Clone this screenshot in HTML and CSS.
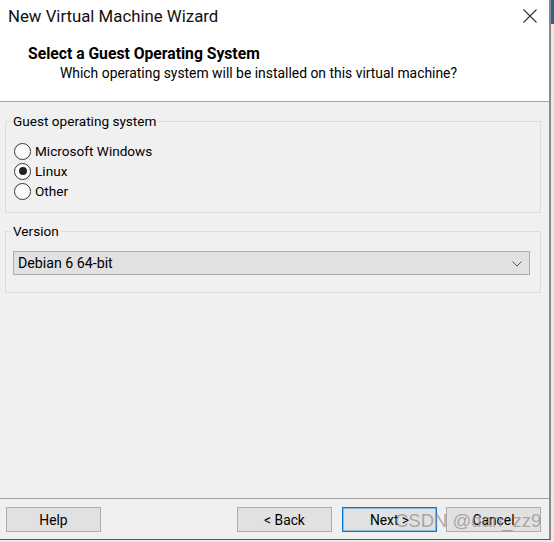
FILE: index.html
```html
<!DOCTYPE html>
<html>
<head>
<meta charset="utf-8">
<link rel="stylesheet" href="styles.css">
</head>
<body>
<div class="window">
  <div class="header">
    <div class="titlebar">
      <span class="title">New Virtual Machine Wizard</span>
      <svg class="close" width="14" height="14" viewBox="0 0 14 14"><path d="M0.5 0.5 L13.5 13.5 M13.5 0.5 L0.5 13.5" stroke="#333" stroke-width="1.1" fill="none"/></svg>
    </div>
    <div class="heading">Select a Guest Operating System</div>
    <div class="subheading">Which operating system will be installed on this virtual machine?</div>
  </div>
  <div class="main">
    <fieldset class="group group-os">
      <legend>Guest operating system</legend>
      <div class="radio"><span class="dot"></span><span>Microsoft Windows</span></div>
      <div class="radio"><span class="dot checked"></span><span>Linux</span></div>
      <div class="radio"><span class="dot"></span><span>Other</span></div>
    </fieldset>
    <fieldset class="group group-ver">
      <legend>Version</legend>
      <div class="select">
        <span>Debian 6 64-bit</span>
        <svg class="chev" width="10" height="6" viewBox="0 0 10 6"><path d="M0.5 0.5 L5 5 L9.5 0.5" stroke="#555" stroke-width="1" fill="none"/></svg>
      </div>
    </fieldset>
  </div>
  <div class="footer">
    <button class="btn">Help</button>
    <div class="nav">
      <button class="btn">&lt; Back</button>
      <button class="btn primary">Next &gt;</button>
      <button class="btn cancel">Cancel</button>
    </div>
  </div>
  <div class="watermark">CSDN @dan_zz9</div>
</div>
<div class="edge"></div>
</body>
</html>
```

FILE: styles.css
```css
html, body {
  margin: 0;
  padding: 0;
}
body {
  width: 554px;
  height: 542px;
  background: #e8e8e8;
  font-family: Roboto, "Liberation Sans", sans-serif;
  color: #000;
  position: relative;
  overflow: hidden;
}
.edge {
  position: absolute;
  left: 551px;
  top: 0;
  width: 3px;
  height: 24px;
  background: #2f5f8a;
}
.window {
  position: relative;
  width: 549px;
  height: 539px;
  background: #f0f0f0;
  border-right: 2px solid #8a8a8a;
  border-bottom: 1px solid #5a5a5a;
  display: flex;
  flex-direction: column;
}
.header {
  background: #fff;
  height: 101px;
  border-bottom: 1px solid #a0a0a0;
}
.titlebar {
  height: 34px;
  display: flex;
  align-items: center;
  padding-left: 8px;
  padding-right: 12px;
}
.title {
  flex: 1;
  font-size: 16.8px;
  color: #111;
  padding-bottom: 2px;
}
.close {
  display: block;
  margin-top: -2px;
}
.heading {
  margin-left: 28px;
  margin-top: 11px;
  font-size: 15.7px;
  font-weight: bold;
  line-height: 18px;
}
.subheading {
  margin-left: 60px;
  margin-top: 1px;
  font-size: 13.9px;
  line-height: 19px;
}
.main {
  flex: 1;
  padding: 0 8px 0 5px;
}
.group {
  margin: 0;
  border: 1px solid #dcdcdc;
  padding: 0 10px 0 7px;
  min-width: 0;
}
.group legend {
  font-size: 13.6px;
  line-height: 16px;
  padding: 0 2px;
  margin-left: -2px;
}
.group-os {
  margin-top: 11px;
  padding-top: 12px;
  padding-bottom: 11px;
}
.group-ver {
  margin-top: 10px;
  padding-top: 12px;
  padding-bottom: 17px;
}
.radio {
  height: 20px;
  display: flex;
  align-items: center;
  gap: 4px;
  margin-left: 1px;
  font-size: 13.6px;
}
.dot {
  width: 15px;
  height: 15px;
  border: 1px solid #333;
  border-radius: 50%;
  background: #fff;
  display: flex;
  align-items: center;
  justify-content: center;
  flex: none;
}
.dot.checked::after {
  content: "";
  width: 8px;
  height: 8px;
  border-radius: 50%;
  background: #222;
}
.select {
  height: 22px;
  border: 1px solid #adadad;
  background: #e1e1e1;
  display: flex;
  align-items: center;
  padding: 0 7px 0 4px;
  font-size: 14.2px;
}
.select span {
  flex: 1;
}
.chev {
  display: block;
  margin-top: 1px;
}
.footer {
  border-top: 1px solid #a0a0a0;
  padding: 8px 8px 7px 6px;
  display: flex;
  justify-content: space-between;
}
.nav {
  display: flex;
}
.btn {
  width: 95px;
  height: 25px;
  margin: 0;
  border: 1px solid #adadad;
  background: #e1e1e1;
  font-family: Roboto, "Liberation Sans", sans-serif;
  font-size: 13.8px;
  color: #000;
  padding: 0;
}
.primary {
  margin-left: 10px;
  border-color: #0078d7;
  box-shadow: inset 0 0 0 1px rgba(0, 120, 215, 0.35);
}
.cancel {
  margin-left: 9px;
}
.watermark {
  position: absolute;
  left: 395px;
  top: 510px;
  font-family: "Liberation Sans", sans-serif;
  font-size: 18.5px;
  line-height: 22px;
  color: rgba(140, 140, 140, 0.7);
  white-space: nowrap;
}
```
